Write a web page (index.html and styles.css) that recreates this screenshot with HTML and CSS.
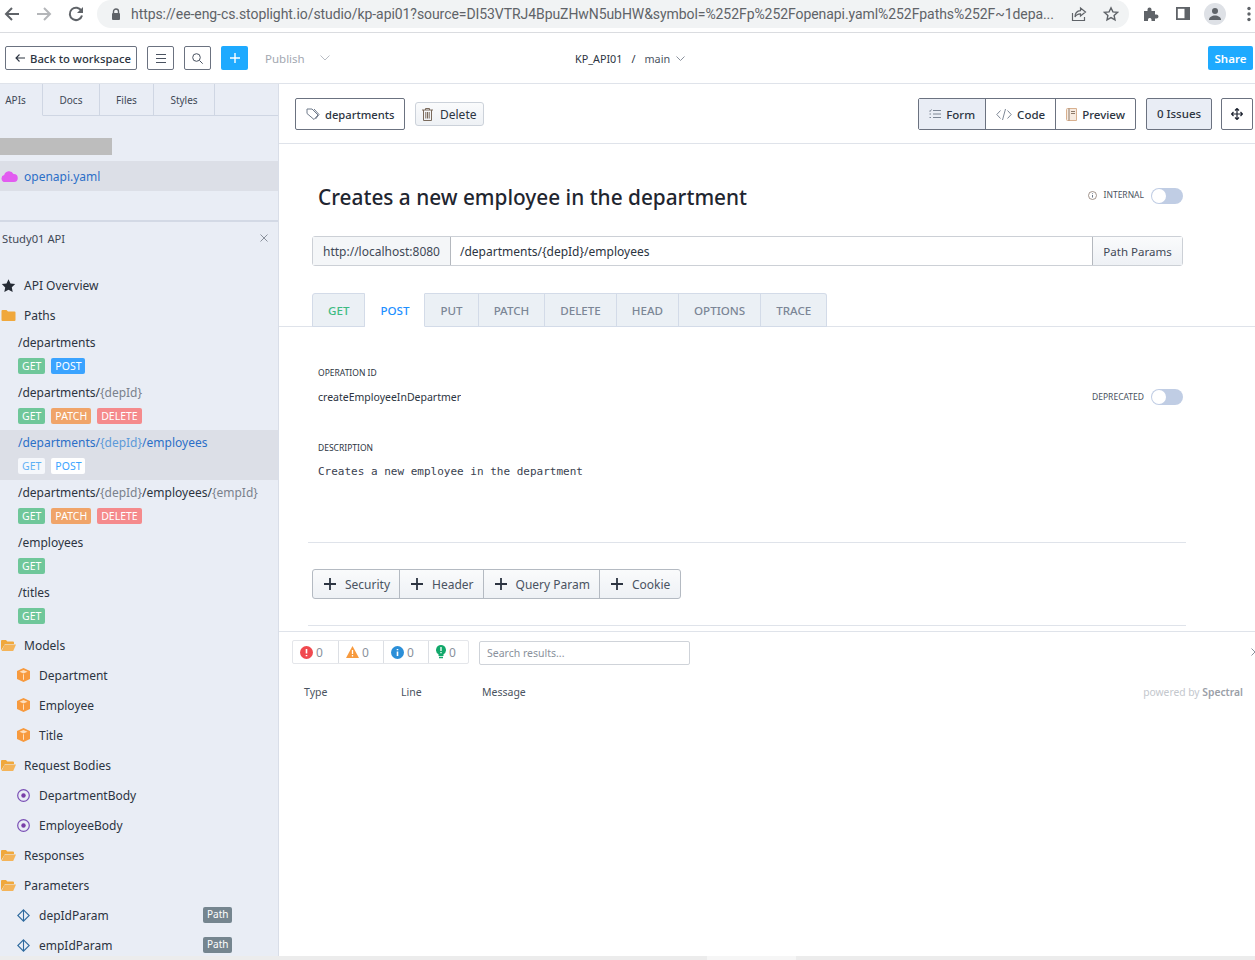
FILE: index.html
```html
<!DOCTYPE html>
<html lang="en">
<head>
  <meta charset="UTF-8">
  <meta name="viewport" content="width=device-width, initial-scale=1.0">
  <title>Stoplight Studio</title>
  <link rel="stylesheet" href="styles.css">
</head>
<body>
  <!-- browser chrome -->
  <div class="chrome">
    <svg class="chrome-btn" width="16" height="16" viewBox="0 0 16 16"><path d="M15 8H2M8 2 2 8l6 6" fill="none" stroke="#5f6368" stroke-width="2"/></svg>
    <svg class="chrome-btn" width="16" height="16" viewBox="0 0 16 16"><path d="M1 8h13M8 2l6 6-6 6" fill="none" stroke="#b4b6b9" stroke-width="2"/></svg>
    <svg class="chrome-btn" width="16" height="16" viewBox="0 0 16 16"><path d="M13.5 5A6.2 6.2 0 1 0 14 9.5" fill="none" stroke="#5f6368" stroke-width="2"/><path d="M15 1v6H9z" fill="#5f6368"/></svg>
    <div class="omnibox">
      <svg class="lock" width="10" height="13" viewBox="0 0 10 13"><path d="M2.5 5V3.500a2.500 2.500 0 0 1 5 0V5" fill="none" stroke="#5f6368" stroke-width="1.400"/><rect x="1" y="5" width="8" height="7" rx="1" fill="#5f6368"/></svg>
      <span class="url">https://ee-eng-cs.stoplight.io/studio/kp-api01?source=DI53VTRJ4BpuZHwN5ubHW&amp;symbol=%252Fp%252Fopenapi.yaml%252Fpaths%252F~1depa...</span>
      <svg class="omni-share" width="16" height="16" viewBox="0 0 16 16"><path d="M1.5 7v7.500h12V11M9.500 2l5 4-5 4V7.800C6.500 7.800 5 9 4 11c0-4 2-6 5.500-6.300z" fill="none" stroke="#5f6368" stroke-width="1.200"/></svg>
      <svg class="omni-star" width="16" height="16" viewBox="0 0 16 16"><path d="m8 1.800 1.900 4.100 4.500.5-3.300 3 .9 4.400L8 11.600l-4 2.200.9-4.400-3.300-3 4.500-.5z" fill="none" stroke="#5f6368" stroke-width="1.400"/></svg>
    </div>
    <svg class="puzzle" width="16" height="16" viewBox="0 0 16 16"><path d="M1 5h3.500V3.500a2 2 0 0 1 4 0V5H12v3.500h1.500a2 2 0 0 1 0 4H12V15H8.500v-1.500a1.800 1.800 0 0 0-3.500 0V15H1z" fill="#5f6368"/></svg>
    <svg class="side-panel" width="14" height="14" viewBox="0 0 14 14"><path d="M0 0h14v13H0z" fill="#5f6368"/><path d="M1.800 1.800h6.700v9.400H1.800z" fill="#fff"/></svg>
    <span class="avatar"><svg width="14" height="14" viewBox="0 0 14 14"><circle cx="7" cy="4" r="3" fill="#5f6368"/><path d="M1 13c0-3 3-4.500 6-4.500s6 1.500 6 4.500z" fill="#5f6368"/></svg></span>
    <svg class="kebab" width="4" height="16" viewBox="0 0 4 16"><circle cx="2" cy="2.500" r="1.700" fill="#5f6368"/><circle cx="2" cy="8" r="1.700" fill="#5f6368"/><circle cx="2" cy="13.500" r="1.700" fill="#5f6368"/></svg>
  </div>

  <!-- app toolbar -->
  <div class="topbar">
    <div class="topbar-left">
      <button class="btn-outline back"><svg width="10" height="10" viewBox="0 0 10 10"><path d="M10 5H1M4.500 1.500 1 5l3.500 3.500" fill="none" stroke="#2c3441" stroke-width="1.100"/></svg>Back to workspace</button>
      <button class="btn-outline icon-btn"><svg width="10" height="9" viewBox="0 0 10 9"><path d="M0 .5h10M0 4.500h10M0 8.500h10" stroke="#4a5361" fill="none"/></svg></button>
      <button class="btn-outline icon-btn"><svg width="11" height="11" viewBox="0 0 11 11"><circle cx="4.500" cy="4.500" r="3.800" fill="none" stroke="#4a5361"/><path d="m7.500 7.500 3.200 3.200" stroke="#4a5361" fill="none"/></svg></button>
      <button class="btn-plus"><svg width="10" height="10" viewBox="0 0 10 10"><path d="M5 0v10M0 5h10" stroke="#fff" stroke-width="1.400" fill="none"/></svg></button>
      <span class="publish">Publish</span>
      <svg class="caret" width="10" height="6" viewBox="0 0 10 6"><path d="m.5.500 4.500 4.500L9.500.5" fill="none" stroke="#b9bdc4"/></svg>
    </div>
    <div class="topbar-mid">
      <span>KP_API01</span><span class="slash">/</span><span class="branch">main</span>
      <svg class="caret-sm" width="9" height="5" viewBox="0 0 9 5"><path d="m.5.500 4 4 4-4" fill="none" stroke="#8a919c"/></svg>
    </div>
    <button class="btn-share">Share</button>
  </div>

  <div class="layout">
    <!-- left sidebar -->
    <aside class="sidebar">
      <div class="side-tabs">
        <span class="side-tab active">APIs</span>
        <span class="side-tab">Docs</span>
        <span class="side-tab">Files</span>
        <span class="side-tab">Styles</span>
      </div>
      <div class="redacted"></div>
      <div class="project-file">
        <svg width="17" height="11" viewBox="0 0 17 11"><path d="M4 11a3.500 3.500 0 0 1-.8-6.900A5 5 0 0 1 12.500 3 4 4 0 0 1 13 11z" fill="#e25cf0"/></svg>
        <span>openapi.yaml</span>
      </div>
      <div class="project-head"><span>Study01 API</span>
        <svg width="8" height="8" viewBox="0 0 8 8"><path d="m.5.500 7 7m0-7-7 7" stroke="#8a919c" fill="none"/></svg>
      </div>
      <div class="tree">
        <div class="row"><svg class="row-icon" width="14" height="13" viewBox="0 0 14 13"><path d="m7 .3 2 4.200 4.700.6-3.400 3.200.9 4.600L7 10.700 2.800 13l.9-4.600L.3 5.100 5 4.500z" fill="#252b35"/></svg>API Overview</div>
        <div class="row"><svg class="row-icon" width="14" height="11" viewBox="0 0 14 11"><path d="M0 1a1 1 0 0 1 1-1h4l1.500 1.500H13a1 1 0 0 1 1 1V10a1 1 0 0 1-1 1H1a1 1 0 0 1-1-1z" fill="#f0a83c"/></svg>Paths</div>

        <div class="path-row">
          <div class="path">/departments</div>
          <div class="badges"><span class="badge get">GET</span><span class="badge post">POST</span></div>
        </div>
        <div class="path-row">
          <div class="path">/departments/<i>{depId}</i></div>
          <div class="badges"><span class="badge get">GET</span><span class="badge patch">PATCH</span><span class="badge delete">DELETE</span></div>
        </div>
        <div class="path-row selected">
          <div class="path">/departments/<i>{depId}</i>/employees</div>
          <div class="badges"><span class="badge get">GET</span><span class="badge post">POST</span></div>
        </div>
        <div class="path-row">
          <div class="path">/departments/<i>{depId}</i>/employees/<i>{empId}</i></div>
          <div class="badges"><span class="badge get">GET</span><span class="badge patch">PATCH</span><span class="badge delete">DELETE</span></div>
        </div>
        <div class="path-row">
          <div class="path">/employees</div>
          <div class="badges"><span class="badge get">GET</span></div>
        </div>
        <div class="path-row">
          <div class="path">/titles</div>
          <div class="badges"><span class="badge get">GET</span></div>
        </div>

        <div class="row"><svg class="row-icon" width="15" height="11" viewBox="0 0 15 11"><use href="#open-folder"/></svg>Models</div>
        <div class="row sub"><svg class="row-icon" width="13" height="14" viewBox="0 0 13 14"><use href="#cube"/></svg>Department</div>
        <div class="row sub"><svg class="row-icon" width="13" height="14" viewBox="0 0 13 14"><use href="#cube"/></svg>Employee</div>
        <div class="row sub"><svg class="row-icon" width="13" height="14" viewBox="0 0 13 14"><use href="#cube"/></svg>Title</div>
        <div class="row"><svg class="row-icon" width="15" height="11" viewBox="0 0 15 11"><use href="#open-folder"/></svg>Request Bodies</div>
        <div class="row sub"><svg class="row-icon" width="13" height="13" viewBox="0 0 13 13"><use href="#target"/></svg>DepartmentBody</div>
        <div class="row sub"><svg class="row-icon" width="13" height="13" viewBox="0 0 13 13"><use href="#target"/></svg>EmployeeBody</div>
        <div class="row"><svg class="row-icon" width="15" height="11" viewBox="0 0 15 11"><use href="#open-folder"/></svg>Responses</div>
        <div class="row"><svg class="row-icon" width="15" height="11" viewBox="0 0 15 11"><use href="#open-folder"/></svg>Parameters</div>
        <div class="row sub param"><svg class="row-icon" width="13" height="13" viewBox="0 0 13 13"><use href="#diamond"/></svg>depIdParam<span class="path-tag">Path</span></div>
        <div class="row sub param"><svg class="row-icon" width="13" height="13" viewBox="0 0 13 13"><use href="#diamond"/></svg>empIdParam<span class="path-tag">Path</span></div>
      </div>
    </aside>

    <main class="main">
      <div class="doc-bar">
        <button class="btn-outline doc-tag"><svg width="14" height="13" viewBox="0 0 14 13"><path d="M1 1h5l6 6-4 4.500-7-6zM8 1l5 5.500L9.500 11" fill="none" stroke="#6f7a8a"/></svg>departments</button>
        <button class="btn-light del-btn"><svg width="11" height="13" viewBox="0 0 11 13"><path d="M0 2h11M3.500 2V.5h4V2M1.500 2v10.500h8V2M3.800 4v6.500M5.500 4v6.500M7.200 4v6.500" fill="none" stroke="#7a6a5c"/></svg>Delete</button>
        <div class="doc-bar-right">
          <div class="view-group">
            <span class="view active"><svg width="12" height="10" viewBox="0 0 12 10"><path d="M4 1.500h8M4 5h8M4 8.500h8M0 1.500l1 1 1.500-2M.5 5h1.500M.5 8.500h1.500" fill="none" stroke="#6f7a8a" stroke-width=".9"/></svg>Form</span>
            <span class="view"><svg width="16" height="11" viewBox="0 0 16 11"><path d="M4.500 1.500.8 5.500l3.700 4M11.500 1.500l3.700 4-3.700 4M9.500 0l-3 11" fill="none" stroke="#6f7a8a" stroke-width=".9"/></svg>Code</span>
            <span class="view"><svg width="11" height="13" viewBox="0 0 11 13"><path d="M.5 1.500A1 1 0 0 1 1.500.5h9v12h-9a1 1 0 0 1-1-1z" fill="#f7ebe0" stroke="#d8b08f"/><path d="M3 .5v12M5 3.500h4M5 5.500h4" stroke="#8d7a6a" fill="none"/></svg>Preview</span>
          </div>
          <button class="btn-outline issues">0 Issues</button>
          <button class="btn-outline move"><svg width="12" height="12" viewBox="0 0 12 12"><path d="M6 .5v11M.5 6h11M4 2.500 6 .5l2 2M4 9.500l2 2 2-2M2.500 4l-2 2 2 2M9.500 4l2 2-2 2" fill="none" stroke="#1d2330" stroke-width="1.200"/></svg></button>
        </div>
      </div>

      <div class="title-row">
        <h1>Creates a new employee in the department</h1>
        <div class="toggle-wrap internal">
          <svg class="info" width="9" height="9" viewBox="0 0 9 9"><circle cx="4.500" cy="4.500" r="4" fill="none" stroke="#8a7a70" stroke-width=".8"/><path d="M4.500 4v2.500M4.500 2.300v.8" stroke="#6f7a8a" fill="none"/></svg>
          <span class="tiny">INTERNAL</span>
          <span class="toggle"></span>
        </div>
      </div>

      <div class="url-bar">
        <span class="host">http://localhost:8080</span>
        <span class="route">/departments/{depId}/employees</span>
        <span class="params">Path Params</span>
      </div>

      <div class="method-tabs">
        <span class="method get-tab">GET</span>
        <span class="method current">POST</span>
        <span class="method">PUT</span>
        <span class="method">PATCH</span>
        <span class="method">DELETE</span>
        <span class="method">HEAD</span>
        <span class="method">OPTIONS</span>
        <span class="method">TRACE</span>
      </div>

      <div class="op-section">
        <div class="op-label">OPERATION ID</div>
        <div class="op-row">
          <div class="op-id">createEmployeeInDepartmer</div>
          <div class="toggle-wrap">
            <span class="tiny">DEPRECATED</span>
            <span class="toggle"></span>
          </div>
        </div>
        <div class="op-label desc-label">DESCRIPTION</div>
        <div class="op-desc">Creates a new employee in the department</div>
      </div>

      <hr class="divider first">

      <div class="add-group">
        <span class="add"><svg width="12" height="12" viewBox="0 0 12 12"><path d="M6 0v12M0 6h12" stroke="#2c3441" stroke-width="1.800" fill="none"/></svg>Security</span>
        <span class="add"><svg width="12" height="12" viewBox="0 0 12 12"><path d="M6 0v12M0 6h12" stroke="#2c3441" stroke-width="1.800" fill="none"/></svg>Header</span>
        <span class="add"><svg width="12" height="12" viewBox="0 0 12 12"><path d="M6 0v12M0 6h12" stroke="#2c3441" stroke-width="1.800" fill="none"/></svg>Query Param</span>
        <span class="add"><svg width="12" height="12" viewBox="0 0 12 12"><path d="M6 0v12M0 6h12" stroke="#2c3441" stroke-width="1.800" fill="none"/></svg>Cookie</span>
      </div>

      <hr class="divider second">

      <section class="issues-panel">
        <div class="issues-top">
          <div class="counts">
            <span class="count"><svg width="13" height="13" viewBox="0 0 13 13"><circle cx="6.500" cy="6.500" r="6.500" fill="#f0494f"/><path d="M6.500 3v4.500M6.500 9v1.300" stroke="#fff" stroke-width="1.600" fill="none"/></svg>0</span>
            <span class="count"><svg width="13" height="12" viewBox="0 0 13 12"><path d="M6.500 0 13 12H0z" fill="#f79a3e"/><path d="M6.500 4v4M6.500 9v1.500" stroke="#fff" stroke-width="1.300" fill="none"/></svg>0</span>
            <span class="count"><svg width="13" height="13" viewBox="0 0 13 13"><circle cx="6.500" cy="6.500" r="6.500" fill="#2b8fd8"/><path d="M6.500 5.500V10M6.500 3v1.300" stroke="#fff" stroke-width="1.600" fill="none"/></svg>0</span>
            <span class="count"><svg width="10" height="14" viewBox="0 0 10 14"><path d="M5 0a5 5 0 0 1 2.500 9.300V11h-5V9.300A5 5 0 0 1 5 0z" fill="#12a86b"/><path d="M3 12.500h4" stroke="#12a86b" stroke-width="1.500" fill="none"/><path d="M5 2v4M5 7v1.300" stroke="#fff" stroke-width="1.300" fill="none"/></svg>0</span>
          </div>
          <input class="search" type="text" placeholder="Search results...">
          <svg class="panel-close" width="4" height="8" viewBox="0 0 4 8"><path d="m.5.500 7 7m0-7-7 7" stroke="#8a919c" fill="none"/></svg>
        </div>
        <div class="issues-head">
          <span class="col-type">Type</span>
          <span class="col-line">Line</span>
          <span class="col-msg">Message</span>
          <span class="powered">powered by <b>Spectral</b></span>
        </div>
      </section>
    </main>
  </div>

  <!-- page scrollbar -->
  <div class="scrollbar"><div class="scroll-thumb"></div></div>

  <!-- shared icon shapes -->
  <svg class="defs" width="0" height="0">
    <defs>
      <g id="open-folder"><path d="M0 10.500V1a1 1 0 0 1 1-1h4l1.300 1.500H12a1 1 0 0 1 1 1V4H4z" fill="#f0a83c"/><path d="M3.600 4.500H15l-2.800 6.500H.6z" fill="#f4b459"/></g>
      <g id="cube"><path d="M6.500 0 13 3v8l-6.500 3L0 11V3z" fill="#f79a3e"/><path d="M2.500 3.700 6.500 2l4 1.700-4 1.800z" fill="#fde0c0"/><path d="M6.500 6.300v5.500" stroke="#fde0c0" fill="none"/></g>
      <g id="target"><circle cx="6.500" cy="6.500" r="5.800" fill="none" stroke="#7a4fb5" stroke-width="1.200"/><circle cx="6.500" cy="6.500" r="2.200" fill="#7a3fa8"/></g>
      <g id="diamond"><path d="M6.500.8 12.200 6.500 6.500 12.200.8 6.500zM6.500.8v11.400" fill="none" stroke="#2e6a9e" stroke-width="1.100"/></g>
    </defs>
  </svg>
</body>
</html>
```

FILE: styles.css
```css
* {
  box-sizing: border-box;
}
html, body {
  height: 100%;
}
body {
  margin: 0;
  height: 960px;
  overflow: hidden;
  font-family: "Noto Sans", "Open Sans", Arial, sans-serif;
  font-size: 12px;
  color: #2c3441;
  background: #fff;
}
button {
  font-family: inherit;
  cursor: pointer;
}
.defs {
  position: absolute;
}

/* browser chrome */
.chrome {
  height: 33px;
  display: flex;
  align-items: center;
  padding: 0 0 4px 4px;
  border-bottom: 1px solid #dadce0;
}
.chrome-btn {
  flex: none;
  margin-right: 16px;
}
.omnibox {
  flex: none;
  width: 1032px;
  margin-left: -3px;
  height: 28px;
  background: #f1f3f4;
  border-radius: 14px;
  display: flex;
  align-items: center;
  padding: 0 10px 0 14px;
}
.lock {
  flex: none;
}
.url {
  margin-left: 10px;
  flex: none;
  font-family: Roboto, Arial, sans-serif;
  font-size: 14px;
  letter-spacing: -.005em;
  color: #5f6368;
  white-space: nowrap;
}
.omni-share {
  flex: none;
  margin-left: auto;
}
.omni-star {
  flex: none;
  margin-left: 16px;
}
.puzzle {
  flex: none;
  margin-left: 14px;
}
.side-panel {
  flex: none;
  margin-left: 17px;
}
.avatar {
  flex: none;
  width: 22px;
  height: 22px;
  border-radius: 50%;
  background: #dee1e6;
  margin-left: 14px;
  display: flex;
  align-items: center;
  justify-content: center;
}
.kebab {
  flex: none;
  margin-left: 21px;
}

/* app toolbar */
.topbar {
  height: 51px;
  display: flex;
  align-items: center;
  justify-content: space-between;
  padding: 0 2px 0 5px;
  border-bottom: 1px solid #dfe3ea;
  position: relative;
}
.topbar-left {
  display: flex;
  align-items: center;
}
.btn-outline {
  background: #fff;
  border: 1px solid #6b7280;
  border-radius: 2px;
  color: #2c3441;
  display: flex;
  align-items: center;
  padding: 0;
  font-size: 11.500px;
}
.back {
  width: 132px;
  height: 24px;
  padding-left: 9px;
  gap: 5px;
  font-size: 11.300px;
  font-weight: 500;
  white-space: nowrap;
}
.icon-btn {
  width: 27px;
  height: 24px;
  justify-content: center;
  margin-left: 10px;
}
.btn-plus {
  width: 27px;
  height: 24px;
  margin-left: 10px;
  border: 0;
  border-radius: 2px;
  background: #1eaaff;
  display: flex;
  align-items: center;
  justify-content: center;
}
.publish {
  color: #a3a8b1;
  margin-left: 17px;
  font-size: 11.500px;
}
.caret {
  margin-left: 15px;
}
.topbar-mid {
  position: absolute;
  left: 575px;
  top: 0;
  height: 50px;
  display: flex;
  align-items: center;
  font-size: 10.800px;
}
.slash {
  margin: 0 9px;
}
.branch {
  color: #4a5361;
}
.caret-sm {
  margin-left: 6px;
}
.btn-share {
  width: 45px;
  height: 24px;
  border: 0;
  border-radius: 2px;
  background: #1eaaff;
  color: #fff;
  font-size: 11.500px;
  font-weight: 600;
  padding: 0;
}

.layout {
  display: flex;
  height: 872px;
}

/* sidebar */
.sidebar {
  flex: none;
  width: 279px;
  background: #e9edf5;
  border-right: 1px solid #d9dee8;
  overflow: hidden;
}
.side-tabs {
  display: flex;
  height: 32px;
  border-bottom: 1px solid #cfd6e3;
}
.side-tab {
  height: 32px;
  border-right: 1px solid #cfd6e3;
  display: flex;
  align-items: center;
  justify-content: center;
  font-size: 10px;
  color: #3f4856;
}
.side-tab:nth-child(1) { width: 43px; padding-right: 11px; background: #e9edf5; border-bottom: 1px solid #e9edf5; }
.side-tab:nth-child(2) { width: 57px; }
.side-tab:nth-child(3) { width: 54px; }
.side-tab:nth-child(4) { width: 61px; }
.redacted {
  width: 112px;
  height: 17px;
  margin-top: 22px;
  background: #bdbdbd;
}
.project-file {
  height: 30px;
  margin-top: 6px;
  background: #dcdfe7;
  display: flex;
  align-items: center;
  gap: 6px;
  padding-left: 1px;
  color: #2c6fc7;
}
.project-head {
  margin-top: 29px;
  height: 36px;
  border-top: 2px solid #d3d9e5;
  display: flex;
  align-items: center;
  justify-content: space-between;
  padding: 0 10px 2px 2px;
  font-size: 11.200px;
  color: #3f4856;
}
.tree {
  margin-top: 14px;
}
.row {
  height: 30px;
  display: flex;
  align-items: center;
  color: #2c3441;
}
.row-icon {
  flex: none;
  margin-left: 1px;
  margin-right: 8px;
}
.row .row-icon {
  width: 15px;
}
.row.sub {
  padding-left: 15px;
}
.path-row {
  height: 50px;
  padding: 5px 0 0 18px;
}
.path {
  height: 15px;
  line-height: 15px;
  color: #2c3441;
  white-space: nowrap;
}
.path i {
  font-style: normal;
  color: #7a818c;
}
.badges {
  display: flex;
  gap: 6px;
  margin-top: 8px;
}
.badge {
  height: 16px;
  line-height: 16px;
  padding: 0 4px;
  border-radius: 2px;
  font-size: 10.500px;
  color: #fff;
}
.badge.get { background: #6fc79a; }
.badge.post { background: #3aa3ff; }
.badge.patch { background: #f0a469; }
.badge.delete { background: #f58a8c; }
.path-row.selected {
  background: #dcdfe7;
}
.selected .path { color: #2c6fc7; }
.selected .path i { color: #5c9ad9; }
.selected .badge { background: #fff; color: #3aa3ff; }
.selected .badge.get { background: #f5f7fb; color: #5fb0f5; }
.param {
  position: relative;
}
.path-tag {
  position: absolute;
  left: 203px;
  top: 7px;
  height: 16px;
  line-height: 15px;
  padding: 0 4px;
  border-radius: 2px;
  background: #75858f;
  color: #fff;
  font-size: 10px;
}

/* main */
.main {
  flex: 1;
  min-width: 0;
  display: flex;
  flex-direction: column;
}
.doc-bar {
  height: 60px;
  flex: none;
  display: flex;
  align-items: center;
  padding: 0 2px 0 16px;
  border-bottom: 1px solid #dfe3ea;
}
.doc-tag {
  height: 32px;
  width: 110px;
  padding: 1px 0 0 10px;
  gap: 5px;
  font-size: 11.200px;
  font-weight: 500;
}
.btn-light {
  background: linear-gradient(#fafbfc, #eef1f5);
  border: 1px solid #ccd2da;
  border-radius: 3px;
  color: #2c3441;
  font-size: 12px;
}
.del-btn {
  height: 24px;
  width: 69px;
  margin-left: 10px;
  display: flex;
  align-items: center;
  gap: 7px;
  padding: 1px 0 0 6px;
}
.doc-bar-right {
  margin-left: auto;
  display: flex;
  align-items: center;
}
.view-group {
  display: flex;
  height: 32px;
  border: 1px solid #6b7280;
  border-radius: 2px;
  font-size: 11.500px;
}
.view {
  display: flex;
  align-items: center;
  gap: 5px;
  padding: 1px 10px 0;
  border-left: 1px solid #6b7280;
  font-weight: 500;
}
.view:first-child {
  border-left: 0;
}
.view.active {
  background: #e9edf5;
}
.issues {
  margin-left: 10px;
  width: 66px;
  height: 32px;
  background: #e9edf5;
  justify-content: center;
  font-weight: 500;
}
.move {
  margin-left: 9px;
  width: 32px;
  height: 32px;
  justify-content: center;
}
.title-row {
  flex: none;
  display: flex;
  align-items: center;
  justify-content: space-between;
  padding: 14px 72px 0 39px;
  height: 92px;
}
h1 {
  margin: 0;
  font-size: 20.800px;
  font-weight: 500;
  color: #1f2630;
}
.toggle-wrap {
  display: flex;
  align-items: center;
  gap: 6px;
}
.toggle-wrap.internal {
  margin-bottom: 3px;
}
.info {
  margin-right: 1px;
}
.tiny {
  font-size: 8.500px;
  margin-bottom: 2px;
  color: #4a5361;
}
.toggle {
  width: 32px;
  height: 16px;
  border-radius: 8px;
  background: #c0cde4;
  position: relative;
  margin-left: 1px;
}
.toggle::after {
  content: "";
  position: absolute;
  left: 1px;
  top: 1px;
  width: 14px;
  height: 14px;
  border-radius: 50%;
  background: #fff;
}
.url-bar {
  flex: none;
  display: flex;
  height: 30px;
  margin: 0 72px 0 33px;
  border: 1px solid #ccd0d6;
  border-radius: 3px;
}
.host {
  width: 138px;
  display: flex;
  align-items: center;
  justify-content: center;
  background: #f4f6f8;
  border-right: 1px solid #b4b8be;
  color: #3f4856;
}
.route {
  flex: 1;
  display: flex;
  align-items: center;
  padding-left: 9px;
  color: #2c3441;
}
.params {
  width: 90px;
  display: flex;
  align-items: center;
  justify-content: center;
  background: linear-gradient(#fafbfc, #eef1f5);
  border-left: 1px solid #b4b8be;
  font-size: 11.500px;
  color: #3f4856;
}
.method-tabs {
  flex: none;
  display: flex;
  height: 34px;
  margin-top: 27px;
  padding-left: 33px;
  border-bottom: 1px solid #dfe3ea;
}
.method {
  height: 34px;
  display: flex;
  align-items: center;
  justify-content: center;
  padding: 0 15px;
  background: #ebf0f5;
  border: 1px solid #d3dbe8;
  border-left: 0;
  font-size: 11.600px;
  font-weight: 500;
  color: #7b8696;
}
.method:first-child {
  border-left: 1px solid #d3dbe8;
  border-radius: 3px 0 0 0;
}
.method:last-child {
  border-radius: 0 3px 0 0;
}
.method.get-tab {
  color: #3dbb82;
}
.method.current {
  background: #fff;
  border-top-color: #fff;
  border-bottom-color: #fff;
  color: #1e90ff;
}
.op-section {
  flex: none;
  padding: 40px 72px 0 39px;
}
.op-label {
  font-size: 8.500px;
  line-height: 12px;
  color: #2c3441;
}
.op-row {
  display: flex;
  align-items: center;
  justify-content: space-between;
  height: 16px;
  margin-top: 10px;
}
.op-id {
  width: 143px;
  overflow: hidden;
  white-space: nowrap;
  font-size: 10.500px;
}
.desc-label {
  margin-top: 37px;
}
.op-desc {
  margin-top: 11px;
  font-family: "DejaVu Sans Mono", monospace;
  font-size: 11px;
  line-height: 14px;
  color: #3a4250;
}
.divider {
  flex: none;
  margin: 0;
  border: 0;
  border-top: 1px solid #dfe3ea;
  margin-left: 29px;
  margin-right: 69px;
}
.divider.first {
  margin-top: 63px;
}
.divider.second {
  margin-top: 26px;
}
.add-group {
  flex: none;
  display: flex;
  align-self: flex-start;
  height: 30px;
  margin: 26px 0 0 33px;
  border: 1px solid #b4bac2;
  border-radius: 3px;
  background: linear-gradient(#fafbfc, #eef1f5);
}
.add {
  display: flex;
  align-items: center;
  gap: 9px;
  padding: 0 9px 0 11px;
  border-left: 1px solid #b4bac2;
  color: #4a5361;
}
.add:first-child {
  border-left: 0;
}
.add:last-child {
  padding-right: 10px;
}
.issues-panel {
  flex: 1;
  margin-top: 5px;
  border-top: 1px solid #dfe3ea;
  padding: 7px 0 0 13px;
}
.issues-top {
  display: flex;
  align-items: center;
}
.counts {
  display: flex;
  height: 24px;
  border: 1px solid #e4e6ea;
  border-radius: 2px;
}
.count {
  display: flex;
  align-items: center;
  gap: 3px;
  width: 45px;
  padding-left: 7px;
  border-left: 1px solid #dcdfe4;
  color: #8a919c;
}
.count:first-child {
  border-left: 0;
}
.count:last-child {
  width: 40px;
}
.search {
  width: 211px;
  height: 24px;
  margin-left: 10px;
  padding: 0 7px;
  border: 1px solid #cfd3d9;
  border-radius: 2px;
  font-family: inherit;
  font-size: 10.500px;
  margin-top: 2px;
}
.search::placeholder {
  color: #8a919c;
}
.panel-close {
  margin-left: auto;
}
.issues-head {
  display: flex;
  align-items: center;
  margin-top: 20px;
  padding-right: 12px;
  font-size: 10.500px;
  color: #4a5361;
}
.col-type {
  width: 109px;
  padding-left: 12px;
}
.col-line {
  width: 81px;
}
.powered {
  margin-left: auto;
  font-size: 10.300px;
  color: #c3c7cd;
}
.powered b {
  color: #9aa0a8;
  font-weight: 600;
}

.scrollbar {
  height: 4px;
  background: #ececec;
}
.scroll-thumb {
  width: 89px;
  height: 4px;
  margin-left: 707px;
  background: #f6f6f6;
}
```
